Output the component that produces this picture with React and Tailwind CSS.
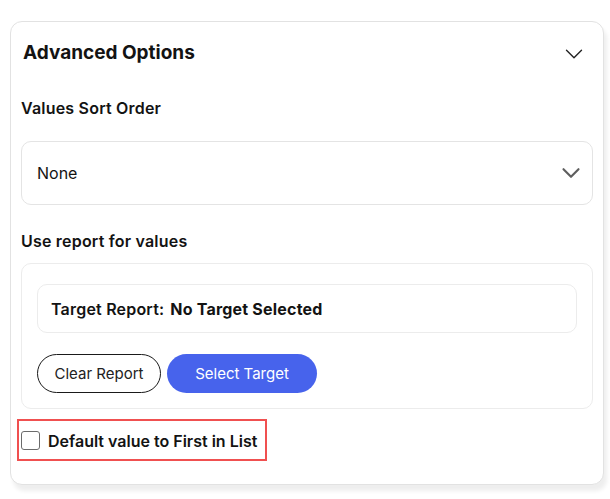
import { ChevronDown } from 'lucide-react';

export default function App() {
    return (
        <div className="min-h-[499px] w-[610px] bg-white pt-[21px] pl-[10px] font-['Inter','Liberation_Sans',sans-serif] text-[#131313]">
            <div className="w-[594px] rounded-[12px] border border-[#e2e2e2] bg-white shadow-[3px_6px_4px_#eeeeee]">
                <div className="flex h-[60px] items-center justify-between pt-[3px] pl-[12px] pr-[14px]">
                    <h2 className="text-[19px] font-bold">Advanced Options</h2>
                    <ChevronDown className="h-[30px] w-[30px] text-[#222]" strokeWidth={1.1} />
                </div>

                <div className="px-[10px] pb-[23px]">
                    <p className="mt-[14px] text-[16px] leading-6 font-semibold tracking-[0.2px]">Values Sort Order</p>

                    <div className="mt-[21px] flex h-[64px] items-center justify-between rounded-[10px] border border-[#e4e4e4] pl-[15px] pr-[6px]">
                        <span className="text-[16px]">None</span>
                        <ChevronDown className="h-[30px] w-[30px] text-[#5e5e5e]" strokeWidth={1.7} />
                    </div>

                    <p className="mt-[24px] text-[16px] leading-6 font-semibold tracking-[0.2px]">Use report for values</p>

                    <div className="mt-[10px] rounded-[10px] border border-[#ececec] px-[15px] pt-[20px] pb-[15px]">
                        <div className="flex h-[49px] items-center rounded-[10px] border border-[#ececec] px-[13px] text-[16px] tracking-[0.2px]">
                            <span className="font-semibold">Target Report:</span>
                            <span className="ml-[6px] font-bold">No Target Selected</span>
                        </div>

                        <div className="mt-[21px] flex gap-[6px]">
                            <button className="h-[39px] w-[124px] rounded-full border border-[#1a1a1a] pt-[2px] text-[15px] text-[#222]">
                                Clear Report
                            </button>
                            <button className="h-[39px] w-[150px] rounded-full bg-[#4763ec] pt-[2px] text-[15px] text-white">
                                Select Target
                            </button>
                        </div>
                    </div>

                    <label className="-ml-[4px] mt-[10px] flex h-[42px] w-[250px] items-center border-2 border-[#f05050] pl-[2px] pt-[1px]">
                        <span className="h-[19px] w-[19px] rounded-[3px] border-[1.5px] border-[#6b6b6b] bg-white" />
                        <span className="ml-[8px] text-[16px] font-semibold">Default value to First in List</span>
                    </label>
                </div>
            </div>
        </div>
    );
}
